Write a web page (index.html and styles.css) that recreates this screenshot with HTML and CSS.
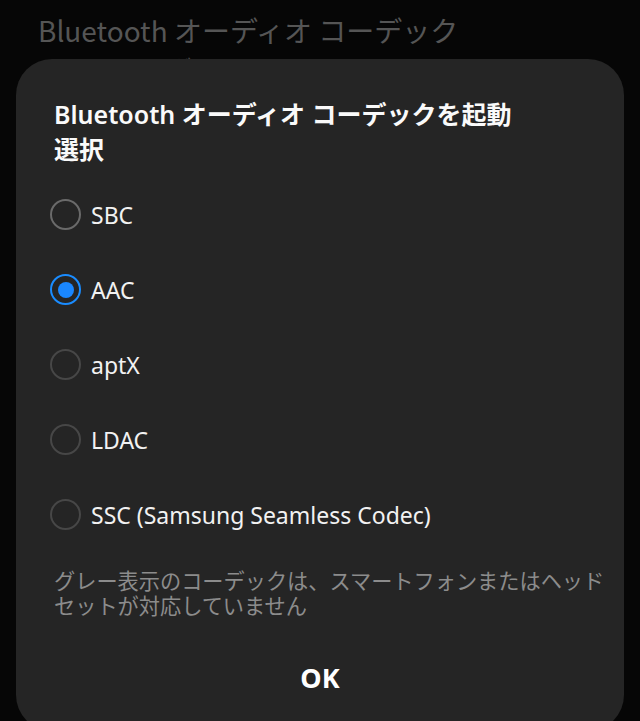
FILE: index.html
```html
<!DOCTYPE html>
<html lang="ja">
<head>
<meta charset="utf-8">
<link rel="stylesheet" href="styles.css">
</head>
<body>
<div class="screen">
  <div class="bg-text">
    <div class="bg-title">Bluetooth オーディオ コーデック</div>
    <div class="bg-sub">ストリーミング AAC</div>
  </div>
  <div class="dialog">
    <h1 class="title">Bluetooth オーディオ コーデックを起動<span class="nw">選択</span></h1>
    <div class="options">
      <div class="option"><span class="radio"></span><span class="label">SBC</span></div>
      <div class="option"><span class="radio checked"></span><span class="label">AAC</span></div>
      <div class="option"><span class="radio dim"></span><span class="label">aptX</span></div>
      <div class="option"><span class="radio dim"></span><span class="label">LDAC</span></div>
      <div class="option"><span class="radio dim"></span><span class="label">SSC (Samsung Seamless Codec)</span></div>
    </div>
    <p class="note">グレー表示のコーデックは、スマートフォンまたはヘッドセットが対応していません</p>
    <div class="actions"><span class="ok">OK</span></div>
  </div>
</div>
</body>
</html>
```
FILE: styles.css
```css
html, body {
  margin: 0;
  padding: 0;
  background: #060606;
  overflow: hidden;
}
.screen {
  width: 640px;
  height: 721px;
  font-family: "Noto Sans", "Noto Sans CJK JP", sans-serif;
  overflow: hidden;
}
.bg-text {
  padding: 12px 0 0 38px;
  color: #555;
  font-size: 28px;
  line-height: 36px;
  height: 47px;
  overflow: hidden;
}
.bg-title {
  font-family: "Noto Sans CJK JP", sans-serif;
}
.bg-sub {
  font-family: "Noto Sans CJK JP", sans-serif;
  font-size: 22px;
  color: #4a4a4a;
}
.dialog {
  margin: 0 16px;
  background: #252525;
  border-radius: 36px;
  height: 672px;
  padding: 38px 38px 0 38px;
  box-sizing: border-box;
}
.title {
  margin: 0;
  color: #fafafa;
  font-size: 25px;
  font-weight: 600;
  line-height: 35px;
  width: 500px;
}
.nw {
  white-space: nowrap;
}
.options {
  margin-top: 10px;
}
.option {
  display: flex;
  align-items: center;
  height: 75px;
}
.radio {
  width: 31px;
  height: 31px;
  box-sizing: border-box;
  border-radius: 50%;
  border: 2px solid #6a6a6a;
  margin-left: -4px;
  margin-right: 10px;
  display: flex;
  align-items: center;
  justify-content: center;
}
.radio.dim {
  border-color: #474747;
}
.radio.checked {
  border-color: #1a8cff;
}
.radio.checked::after {
  content: "";
  width: 16px;
  height: 16px;
  border-radius: 50%;
  background: #1a87ff;
}
.label {
  color: #f2f2f2;
  font-size: 23px;
}
.note {
  font-family: "Noto Sans CJK JP", sans-serif;
  margin: 15px 0 0 0;
  color: #8c8c8c;
  font-size: 21.2px;
  line-height: 25px;
  width: 556px;
}
.actions {
  display: flex;
  justify-content: center;
  margin-top: 43px;
}
.ok {
  color: #fff;
  font-weight: 700;
  font-size: 27px;
  line-height: 36px;
}
```
